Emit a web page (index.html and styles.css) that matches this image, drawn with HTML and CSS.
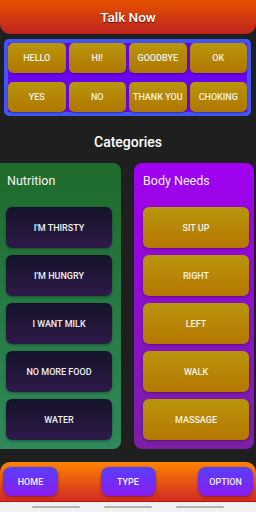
FILE: index.html
```html
<!DOCTYPE html>
<html>
<head>
<meta charset="utf-8">
<link rel="stylesheet" href="styles.css">
</head>
<body>
<div class="app">
  <header class="topbar">Talk Now</header>
  <section class="quick">
    <div class="qbtn">HELLO</div>
    <div class="qbtn">HI!</div>
    <div class="qbtn">GOODBYE</div>
    <div class="qbtn">OK</div>
    <div class="qbtn">YES</div>
    <div class="qbtn">NO</div>
    <div class="qbtn">THANK YOU</div>
    <div class="qbtn">CHOKING</div>
  </section>
  <h2 class="section-title">Categories</h2>
  <div class="cats">
    <div class="cat cat-green">
      <div class="cat-title">Nutrition</div>
      <div class="cat-list">
        <div class="cbtn dark">I'M THIRSTY</div>
        <div class="cbtn dark">I'M HUNGRY</div>
        <div class="cbtn dark">I WANT MILK</div>
        <div class="cbtn dark">NO MORE FOOD</div>
        <div class="cbtn dark">WATER</div>
      </div>
    </div>
    <div class="cat cat-purple">
      <div class="cat-title">Body Needs</div>
      <div class="cat-list">
        <div class="cbtn gold">SIT UP</div>
        <div class="cbtn gold">RIGHT</div>
        <div class="cbtn gold">LEFT</div>
        <div class="cbtn gold">WALK</div>
        <div class="cbtn gold">MASSAGE</div>
      </div>
    </div>
  </div>
  <nav class="bottombar">
    <div class="nbtn">HOME</div>
    <div class="nbtn">TYPE</div>
    <div class="nbtn">OPTION</div>
  </nav>
  <div class="sysnav">
    <span class="line"></span>
    <span class="line"></span>
    <span class="line"></span>
  </div>
</div>
</body>
</html>
```
FILE: styles.css
```css
* { box-sizing: border-box; }
html, body {
  margin: 0;
  padding: 0;
  background: #1f1f1f;
  width: 256px;
  height: 512px;
  overflow: hidden;
  font-family: Roboto, "Open Sans", sans-serif;
  color: #fff;
}
.app {
  display: flex;
  flex-direction: column;
  width: 256px;
  height: 512px;
}
.topbar {
  height: 34px;
  flex: none;
  background: linear-gradient(#e45200, #bf2420);
  border-radius: 0 0 10px 10px;
  display: flex;
  align-items: center;
  justify-content: center;
  font-size: 13.5px;
  font-weight: 500;
  text-shadow: 0 1px 1px rgba(60,0,0,0.8);
}
.quick {
  flex: none;
  margin: 5px 5px 0 4px;
  height: 77px;
  border: 4px solid #4156f8;
  border-radius: 5px;
  background: #6a06ee;
  display: grid;
  grid-template-columns: repeat(4, 1fr);
  grid-template-rows: 30px 30px;
  column-gap: 3px;
  row-gap: 9px;
}
.qbtn {
  background: linear-gradient(#b8960c, #b07600);
  border-radius: 5px;
  display: flex;
  align-items: center;
  justify-content: center;
  font-size: 9px;
  font-weight: 500;
  color: #f6f2e6;
  box-shadow: 0 1px 2px rgba(0,0,0,0.35);
  white-space: nowrap;
}
.section-title {
  margin: 16px 0 11px;
  height: 20px;
  line-height: 20px;
  text-align: center;
  font-size: 14px;
  font-weight: 500;
}
.cats {
  flex: none;
  height: 286px;
  display: flex;
  gap: 13px;
}
.cat {
  flex: none;
  border-radius: 8px;
  padding: 10px 0 0 9px;
}
.cat-green {
  width: 123px;
  margin-left: -2px;
  border-radius: 0 8px 8px 0;
  background: linear-gradient(#1f6a2c, #2e8a5b);
}
.cat-purple {
  width: 120px;
  background: linear-gradient(#a000f2, #7a20a4);
}
.cat-title {
  height: 16px;
  line-height: 16px;
  font-size: 12.5px;
  color: #f4f4f4;
}
.cat-list {
  margin-top: 18px;
  display: flex;
  flex-direction: column;
  gap: 7px;
}
.cbtn {
  height: 41px;
  width: 106px;
  border-radius: 6px;
  display: flex;
  align-items: center;
  justify-content: center;
  font-size: 9px;
  font-weight: 500;
  box-shadow: 0 1px 3px rgba(0,0,0,0.35);
}
.cat-green .cbtn { margin-left: -1px; }
.dark {
  background: linear-gradient(#15132a, #2e1a49);
  color: #f0f0f0;
}
.gold {
  background: linear-gradient(#b8960c, #b67600);
  color: #f6f2e6;
}
.bottombar {
  flex: none;
  margin-top: 13px;
  height: 40px;
  background: linear-gradient(#ff8400, #d02a22);
  border-radius: 10px 10px 0 0;
  border-bottom: 1px solid #c01010;
  display: flex;
  justify-content: space-between;
  align-items: flex-start;
  padding: 5px 3px 0;
}
.nbtn {
  width: 55px;
  height: 29px;
  border-radius: 8px;
  background: linear-gradient(#5640f8, #8a1cf0);
  display: flex;
  align-items: center;
  justify-content: center;
  font-size: 9px;
  font-weight: 500;
  color: #f4f0ff;
  box-shadow: 0 1px 3px rgba(0,0,0,0.35);
}
.sysnav {
  flex: 1;
  background: #f1f1f1;
  display: flex;
  justify-content: center;
  gap: 24px;
  padding-top: 4px;
}
.line {
  width: 48px;
  height: 2px;
  background: #b4b4b4;
  border-radius: 1px;
}
```
